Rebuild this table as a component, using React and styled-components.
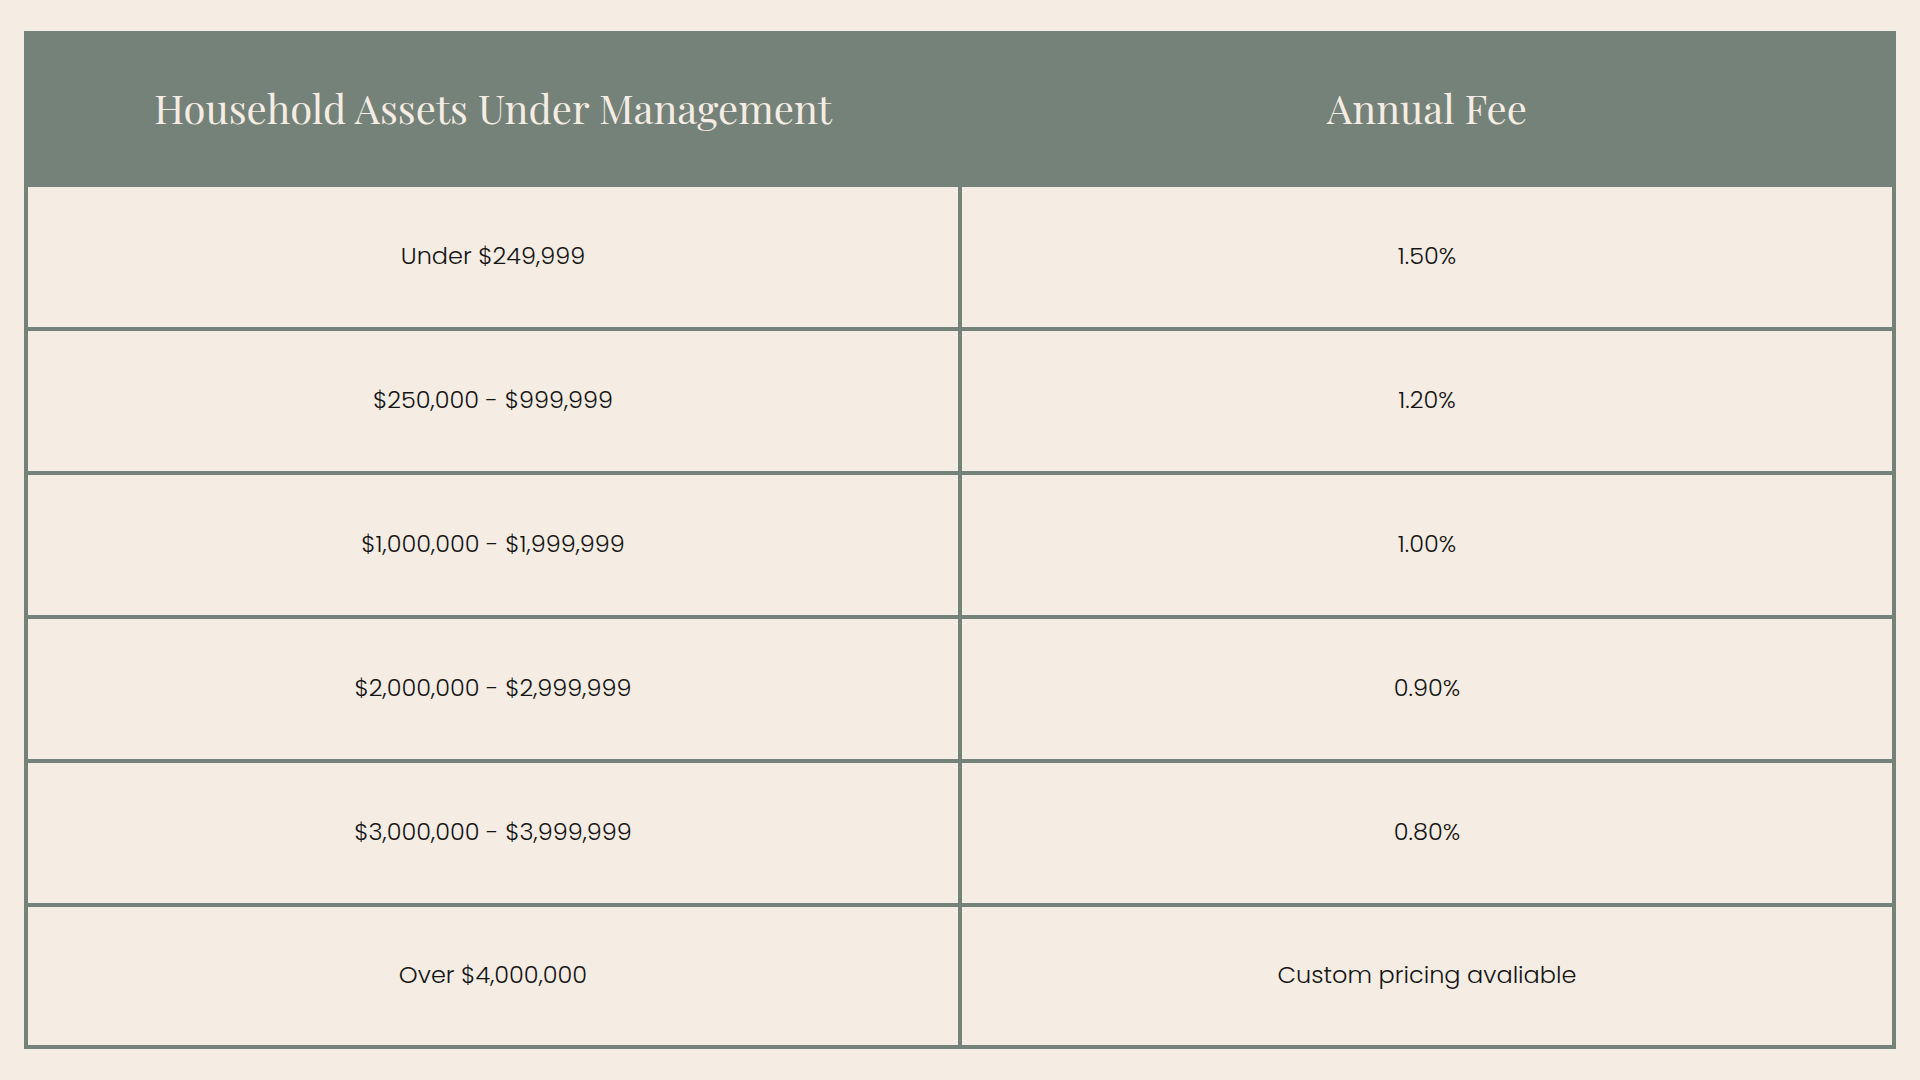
import React from 'react'
import styled, { createGlobalStyle } from 'styled-components';

const GlobalStyle = createGlobalStyle`
  html, body {
    margin: 0;
    padding: 0;
    background: #f5ece3;
  }
`;

const PAGE = styled.div`
  width: 1920px;
  height: 1080px;
  box-sizing: border-box;
  padding: 31px 24px;
  background: #f5ece3;
`;

const TABLE = styled.div`
  display: grid;
  grid-template-columns: 1fr 1fr;
  grid-template-rows: 148px repeat(5, 140px) 138px;
  gap: 4px;
  padding: 4px;
  background: #758279;
`;

const HEAD = styled.div`
  display: flex;
  align-items: center;
  justify-content: center;
  background: #758279;
  color: #f5ece3;
  font-family: "Playfair Display", "Liberation Serif", serif;
  font-size: 40px;
  font-weight: 400;
  margin-bottom: -4px;
  padding-bottom: 8px;
`;

const CELL = styled.div`
  display: flex;
  align-items: center;
  justify-content: center;
  background: #f5ece3;
  color: #141414;
  font-family: "Poppins", "Open Sans", sans-serif;
  font-weight: 300;
  font-size: 24px;
  padding-bottom: 4px;
`;

const rows = [
  ['Under $249,999', '1.50%'],
  ['$250,000 - $999,999', '1.20%'],
  ['$1,000,000 - $1,999,999', '1.00%'],
  ['$2,000,000 - $2,999,999', '0.90%'],
  ['$3,000,000 - $3,999,999', '0.80%'],
  ['Over $4,000,000', 'Custom pricing avaliable'],
];

const App = () => {
  return (
    <PAGE>
      <GlobalStyle />
      <TABLE>
        <HEAD>Household Assets Under Management</HEAD>
        <HEAD>Annual Fee</HEAD>
        {rows.map(([assets, fee]) => (
          <React.Fragment key={assets}>
            <CELL>{assets}</CELL>
            <CELL>{fee}</CELL>
          </React.Fragment>
        ))}
      </TABLE>
    </PAGE>
  )
}

export default App
